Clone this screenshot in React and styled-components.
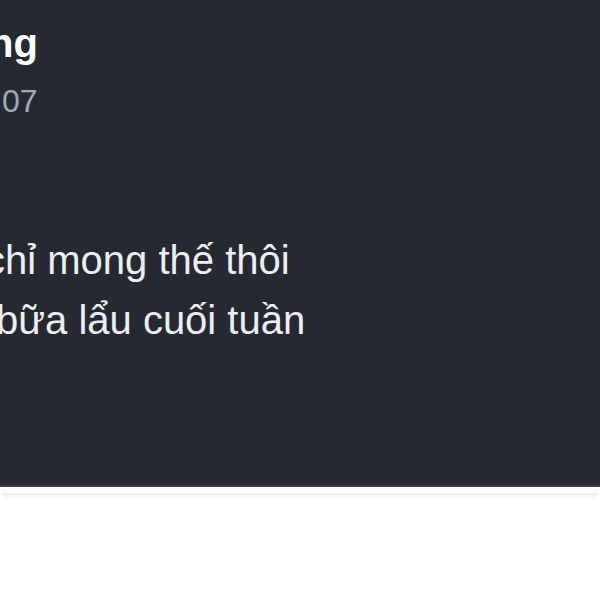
import React from 'react'
import styled, { createGlobalStyle } from 'styled-components'

const GlobalStyle = createGlobalStyle`
  html, body {
    margin: 0;
    padding: 0;
    background: #ffffff;
    font-family: "Liberation Sans", Arial, sans-serif;
  }
`

const Page = styled.div`
  width: 600px;
  height: 600px;
  overflow: hidden;
  display: flex;
  flex-direction: column;
`

const Card = styled.article`
  height: 487px;
  background: #252932;
  border-bottom: 2px solid #3a3e46;
  padding-top: 19px;
  box-sizing: border-box;
  display: flex;
  flex-direction: column;
  overflow: hidden;
  flex-shrink: 0;
`

const Name = styled.div`
  font-size: 40px;
  line-height: 48px;
  font-weight: 700;
  color: #ffffff;
  margin-left: ${(p) => p.offset}px;
  white-space: nowrap;
`

const Meta = styled.div`
  margin-top: 14px;
  font-size: 32px;
  line-height: 40px;
  color: #a3a9b2;
  margin-left: ${(p) => p.offset}px;
  white-space: nowrap;
`

const Body = styled.div`
  margin-top: 109px;
  display: flex;
  flex-direction: column;
`

const Line = styled.p`
  margin: 0;
  font-size: 40px;
  line-height: 60px;
  color: #eceef0;
  white-space: nowrap;
  margin-left: ${(p) => p.offset}px;
`

const NextCard = styled.div`
  margin: 6px 3px 0;
  flex: 1;
  background: linear-gradient(#efefef 0, #f6f6f6 3px, #ffffff 6px);
`

export default function App() {
  return (
    <>
      <GlobalStyle />
      <Page>
        <Card>
          <Name offset={-11}>ng</Name>
          <Meta offset={2}>07</Meta>
          <Body>
            <Line offset={-15}>chỉ mong thế thôi</Line>
            <Line offset={-4}>bữa lẩu cuối tuần</Line>
          </Body>
        </Card>
        <NextCard />
      </Page>
    </>
  )
}
